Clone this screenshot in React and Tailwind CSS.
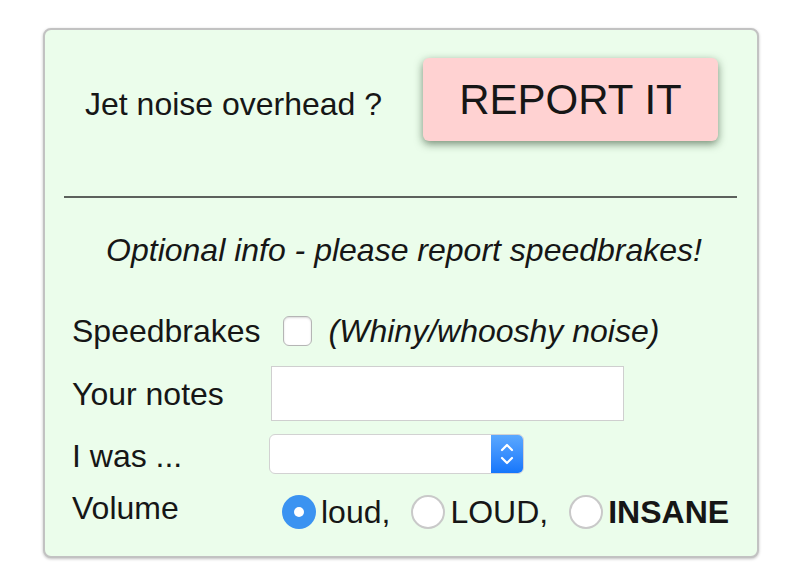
import { useState } from 'react';

const Radio = ({ checked, onClick }) => (
    <button
        type="button"
        onClick={onClick}
        className={
            checked
                ? 'w-[34px] h-[34px] rounded-full bg-[#3b93f1] flex items-center justify-center shrink-0'
                : 'w-[34px] h-[34px] rounded-full bg-white border-2 border-[#c9c9c9] shrink-0'
        }
    >
        {checked && <span className="block w-[10px] h-[10px] rounded-full bg-white" />}
    </button>
);

const App = () => {
    const [volume, setVolume] = useState('loud');
    const [speedbrakes, setSpeedbrakes] = useState(false);
    const [notes, setNotes] = useState('');

    return (
        <div className="pt-[28px] pl-[43px] bg-white min-h-[584px] text-[#161616] leading-[36px]" style={{ fontFamily: '"Liberation Sans", Arial, sans-serif' }}>
            <div className="w-[716px] h-[530px] border-2 border-[#c2c2c2] rounded-[8px] bg-[#ebfdeb] shadow-[0_1px_3px_rgba(0,0,0,0.25)]">
                {/* top: question + button */}
                <div className="flex items-center pt-[28px] pl-[40px]">
                    <div className="w-[338px] text-[32px] mt-[8px]">Jet noise overhead ?</div>
                    <button
                        type="button"
                        className="w-[295px] h-[83px] bg-[#ffd2d2] rounded-[6px] text-[42px] leading-[48px] shadow-[0_3px_9px_rgba(20,50,20,0.55)]"
                    >
                        REPORT IT
                    </button>
                </div>

                <div className="mt-[55px] ml-[19px] mr-[20px] border-t-2 border-[#5c615c]" />

                <div className="mt-[34px] text-center italic text-[32px] pl-[6px]">
                    Optional info - please report speedbrakes!
                </div>

                <div className="pl-[27px] text-[32px]">
                    <div className="flex items-center mt-[45px]">
                        <span>Speedbrakes</span>
                        <button
                            type="button"
                            onClick={() => setSpeedbrakes(!speedbrakes)}
                            className="ml-[22px] w-[29px] h-[30px] rounded-[6px] bg-white border border-[#b5b5b5] shadow-[inset_0_1px_2px_rgba(0,0,0,0.15)] flex items-center justify-center text-[20px]"
                        >
                            {speedbrakes ? '✓' : ''}
                        </button>
                        <span className="ml-[17px] italic">(Whiny/whooshy noise)</span>
                    </div>

                    <div className="flex items-center mt-[17px]">
                        <span className="w-[199px]">Your notes</span>
                        <input
                            value={notes}
                            onChange={(e) => setNotes(e.target.value)}
                            className="w-[353px] h-[55px] bg-white border border-[#cfcfcf] px-2 text-[22px] outline-none"
                        />
                    </div>

                    <div className="flex items-center mt-[13px]">
                        <span className="w-[197px] mt-[4px]">I was ...</span>
                        <div className="flex w-[255px] h-[40px] rounded-[6px] border border-[#d2d2d2] bg-white overflow-hidden">
                            <div className="flex-1" />
                            <div className="w-[32px] h-full bg-gradient-to-b from-[#5aa8ff] to-[#1476fb] flex items-center justify-center">
                                <svg width="16" height="26" viewBox="0 0 16 26" fill="none" stroke="white" strokeWidth="2.2" strokeLinecap="round" strokeLinejoin="round">
                                    <path d="M3 9 L8 4 L13 9" />
                                    <path d="M3 17 L8 22 L13 17" />
                                </svg>
                            </div>
                        </div>
                    </div>

                    <div className="flex items-center mt-[20px]">
                        <span className="w-[210px] -mt-[8px]">Volume</span>
                        <Radio checked={volume === 'loud'} onClick={() => setVolume('loud')} />
                        <span className="ml-[5px]">loud,</span>
                        <span className="ml-[21px] flex"><Radio checked={volume === 'LOUD'} onClick={() => setVolume('LOUD')} /></span>
                        <span className="ml-[5px]">LOUD,</span>
                        <span className="ml-[21px] flex"><Radio checked={volume === 'INSANE'} onClick={() => setVolume('INSANE')} /></span>
                        <span className="ml-[5px] font-bold">INSANE</span>
                    </div>
                </div>
            </div>
        </div>
    );
};

export default App;
